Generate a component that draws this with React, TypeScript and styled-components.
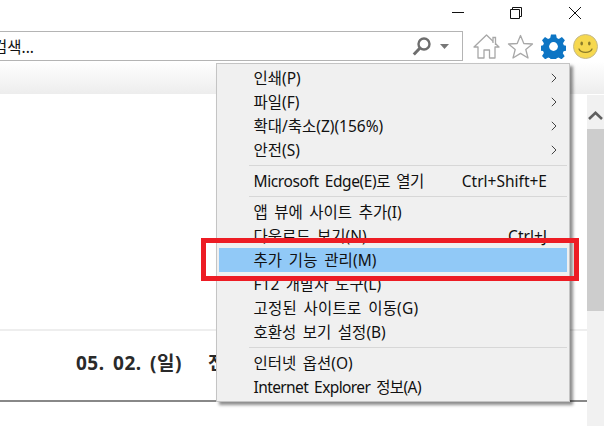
import React from "react";
import styled, { createGlobalStyle } from "styled-components";

const Global = createGlobalStyle`
  html, body { margin: 0; padding: 0; background: #fff; }
  * { box-sizing: border-box; }
`;

const KR = `"Noto Sans", "Noto Sans CJK KR", sans-serif`;

const Page = styled.div`
  position: relative;
  width: 604px;
  height: 426px;
  overflow: hidden;
  background: #fff;
  display: flex;
  flex-direction: column;
  font-family: ${KR};
`;

const TitleBar = styled.div`
  height: 31px;
  display: flex;
  justify-content: flex-end;
`;

const WinButton = styled.div`
  width: 58px;
  height: 31px;
  display: flex;
  align-items: flex-start;
  justify-content: center;
  padding-top: 7px;
  svg { display: block; }
`;

const RestoreButton = styled(WinButton)`
  width: 59px;
  padding-right: 2px;
`;

const Toolbar = styled.div`
  height: 30px;
  display: flex;
`;

const SearchBox = styled.div`
  width: 463px;
  height: 30px;
  border: 1px solid #b4b4b4;
  border-left: 0;
  display: flex;
  align-items: center;
  justify-content: space-between;
  padding-right: 13px;
  font-size: 15.5px;
  color: #111;
  overflow: hidden;
`;

const SearchText = styled.span`
  margin-left: -7px;
  white-space: nowrap;
`;

const SearchTools = styled.div`
  display: flex;
  align-items: center;
  gap: 9px;
`;

const ToolIcons = styled.div`
  display: flex;
  align-items: center;
  padding-left: 10px;
  gap: 7px;
  svg { display: block; }
`;

const Strip = styled.div`
  height: 33px;
  background: linear-gradient(#ffffff, #ededed);
`;

const Body = styled.div`
  flex: 1;
  display: flex;
  min-height: 0;
`;

const Main = styled.div`
  width: 587px;
  padding-top: 235px;
`;

const DateRow = styled.div`
  height: 73px;
  border-top: 2px solid #eeeeee;
  border-bottom: 2px solid #888888;
  display: flex;
  align-items: center;
  padding: 0 0 7px 76px;
  gap: 26px;
  font-size: 19px;
  font-weight: 700;
  letter-spacing: 0.5px;
  word-spacing: 3px;
  color: #2a2a2a;
  white-space: nowrap;
`;

const Scrollbar = styled.div`
  width: 17px;
  margin-top: 1px;
  background: #f1f1f1;
  display: flex;
  flex-direction: column;
`;

const ScrollArrow = styled.div`
  height: 34px;
  display: flex;
  align-items: center;
  justify-content: center;
  padding-top: 7px;
`;

const ScrollThumb = styled.div`
  height: 182px;
  background: #cdcdcd;
`;

const Menu = styled.div`
  position: absolute;
  left: 216px;
  top: 63px;
  width: 354px;
  height: 339px;
  background: #f0f0f0;
  border: 1px solid #c4c4c4;
  box-shadow: 3px 3px 3px rgba(0, 0, 0, 0.45);
  padding: 2px;
  display: flex;
  flex-direction: column;
  font-size: 15.5px;
  word-spacing: 2.5px;
  color: #111;
`;

const Row = styled.div<{ $active?: boolean }>`
  height: 24px;
  flex: none;
  display: flex;
  align-items: center;
  justify-content: space-between;
  padding: 0 10px 0 34.5px;
  background: ${(p) => (p.$active ? "#91c9f7" : "transparent")};
  white-space: nowrap;
  line-height: 24px;
`;

const Label = styled.span<{ $track?: number }>`
  letter-spacing: ${(p) => p.$track ?? 0}px;
`;

const Sep = styled.div`
  height: 1px;
  flex: none;
  margin: 3px 0 3px 30px;
  background: #d7d7d7;
`;

const Shortcut = styled.span`
  margin-right: 10px;
`;

const Highlight = styled.div`
  position: absolute;
  left: 201px;
  top: 238px;
  width: 378px;
  height: 43px;
  border: 5px solid #ed1c24;
`;

const Chevron = () => (
  <svg width="6" height="10" viewBox="0 0 6 10" fill="none" stroke="#444" strokeWidth="1">
    <path d="M.8.8 5 5 .8 9.2" />
  </svg>
);

const Home = () => (
  <svg width="27" height="25" viewBox="0 0 27 25" fill="#fff" stroke="#a8a8a8" strokeWidth="1.3">
    <path d="M1 13 13.5 1 26 13h-4v11h-5.500v-8h-5.500v8H5V13Z" strokeLinejoin="round" />
    <path d="M20 9V3.500h2.500V11" />
  </svg>
);

const Star = () => (
  <svg width="27" height="25" viewBox="0 0 27 25" fill="#fff" stroke="#a8a8a8" strokeWidth="1.3">
    <path d="M13.500 1.500 16.800 9.500 25.500 10 18.800 15.500 21 24 13.500 19.400 6 24 8.200 15.500 1.500 10 10.200 9.500Z" strokeLinejoin="round" />
  </svg>
);

const Gear = () => (
  <svg width="25" height="25" viewBox="0 0 25 25">
    <path
      fill="#0d75c4"
      d="M10 .5h5l.8 3.600 2 .8 3.100-2 3 3.300-1.900 3 .8 2 3.200.7v4.500l-3.400.8-.8 2 1.900 3-3.200 3.100-3-1.900-2 .8-.6 3.300h-5l-.7-3.300-2-.8-3 1.900-3.200-3.200 1.900-3-.8-2-3.400-.7v-4.500l3.400-.7.8-2-1.900-3L4 2.900l3.100 2 2.100-.8Z"
    />
    <circle cx="12.500" cy="12.500" r="4.400" fill="#fff" />
  </svg>
);

const Smile = () => (
  <svg width="25" height="25" viewBox="0 0 25 25">
    <circle cx="12.500" cy="12.500" r="12" fill="#f6d84f" stroke="#c4b98c" />
    <ellipse cx="8.700" cy="9.500" rx="1.300" ry="2" fill="#8a7a2a" />
    <ellipse cx="16.300" cy="9.500" rx="1.300" ry="2" fill="#8a7a2a" />
    <path d="M6 15c2 4.500 11 4.500 13 0" fill="none" stroke="#8a7a2a" strokeWidth="1.300" strokeLinecap="round" />
  </svg>
);

type Item =
  | { label: string; sub?: boolean; shortcut?: string; active?: boolean; track?: number }
  | "sep";

const items: Item[] = [
  { label: "인쇄(P)", sub: true },
  { label: "파일(F)", sub: true },
  { label: "확대/축소(Z)(156%)", sub: true },
  { label: "안전(S)", sub: true },
  "sep",
  { label: "Microsoft Edge(E)로 열기", shortcut: "Ctrl+Shift+E", track: -0.4 },
  "sep",
  { label: "앱 뷰에 사이트 추가(I)" },
  { label: "다운로드 보기(N)", shortcut: "Ctrl+J" },
  { label: "추가 기능 관리(M)", active: true, track: 0.1 },
  { label: "F12 개발자 도구(L)" },
  { label: "고정된 사이트로 이동(G)", track: 0.2 },
  { label: "호환성 보기 설정(B)" },
  "sep",
  { label: "인터넷 옵션(O)" },
  { label: "Internet Explorer 정보(A)", track: -0.6 },
];

export default function App() {
  return (
    <Page>
      <Global />
      <TitleBar>
        <WinButton>
          <svg width="12" height="12" viewBox="0 0 12 12" stroke="#111" fill="none">
            <path d="M0 5.500h12" />
          </svg>
        </WinButton>
        <RestoreButton>
          <svg width="12" height="12" viewBox="0 0 12 12" stroke="#111" fill="none">
            <path d="M.5 2.500h9v9h-9zM2.500 2.500v-2h9v9h-2" />
          </svg>
        </RestoreButton>
        <WinButton>
          <svg width="12" height="12" viewBox="0 0 12 12" stroke="#111" fill="none">
            <path d="M0 0 12 12M12 0 0 12" />
          </svg>
        </WinButton>
      </TitleBar>
      <Toolbar>
        <SearchBox>
          <SearchText>검색...</SearchText>
          <SearchTools>
            <svg width="19" height="19" viewBox="0 0 19 19" fill="none" stroke="#6e6e6e" strokeWidth="2.400">
              <circle cx="12" cy="7" r="5.500" />
              <path d="M8 11 1.800 17.500" strokeWidth="3" />
            </svg>
            <svg width="9" height="5" viewBox="0 0 9 5" fill="#777">
              <path d="M0 0h9L4.500 5Z" />
            </svg>
          </SearchTools>
        </SearchBox>
        <ToolIcons>
          <Home />
          <Star />
          <Gear />
          <Smile />
        </ToolIcons>
      </Toolbar>
      <Strip />
      <Body>
        <Main>
          <DateRow>
            <span>05. 02. (일)</span>
            <span>전</span>
          </DateRow>
        </Main>
        <Scrollbar>
          <ScrollArrow>
            <svg width="15" height="9" viewBox="0 0 15 9" fill="none" stroke="#606060" strokeWidth="2.600">
              <path d="M1 8 7.500 1.800 14 8" />
            </svg>
          </ScrollArrow>
          <ScrollThumb />
        </Scrollbar>
      </Body>
      <Menu>
        {items.map((it, i) =>
          it === "sep" ? (
            <Sep key={i} />
          ) : (
            <Row key={i} $active={it.active}>
              <Label $track={it.track}>{it.label}</Label>
              {it.sub && <Chevron />}
              {it.shortcut && <Shortcut>{it.shortcut}</Shortcut>}
            </Row>
          )
        )}
      </Menu>
      <Highlight />
    </Page>
  );
}
